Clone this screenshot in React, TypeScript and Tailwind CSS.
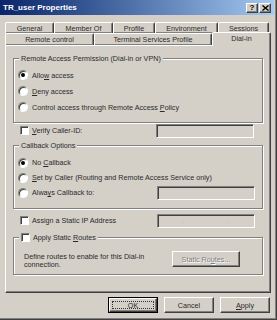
import type { ReactNode } from "react";

// Windows 2000 style "TR_user Properties" dialog, Dial-in tab.

const RAISED =
  "border border-t-white border-l-white border-r-[#404040] border-b-[#404040] shadow-[inset_-1px_-1px_0_#808080]";
const SUNKEN =
  "border border-t-[#808080] border-l-[#808080] border-r-white border-b-white shadow-[inset_1px_1px_0_#404040]";

function Radio({ checked = false }: { checked?: boolean }) {
  return (
    <span
      className={`flex h-[10px] w-[10px] shrink-0 items-center justify-center rounded-full bg-white ${SUNKEN}`}
    >
      {checked && <span className="h-[4px] w-[4px] rounded-full bg-black" />}
    </span>
  );
}

function Checkbox() {
  return <span className={`h-[9px] w-[9px] shrink-0 bg-white ${SUNKEN}`} />;
}

function Field({ children }: { children?: ReactNode }) {
  return (
    <div
      className={`ml-auto flex h-[14px] w-[98px] items-center bg-[#d4d0c8] ${SUNKEN}`}
    >
      {children}
    </div>
  );
}

function Group({
  label,
  className,
  children,
}: {
  label: ReactNode;
  className: string;
  children: ReactNode;
}) {
  return (
    <div
      className={`relative w-[250px] border border-[#808080] shadow-[inset_1px_1px_0_#fff,1px_1px_0_#fff] ${className}`}
    >
      <div className="absolute -top-[5px] left-[5px] flex h-[9px] items-center gap-[3px] bg-[#d4d0c8] px-[2px]">
        {label}
      </div>
      {children}
    </div>
  );
}

function Option({
  checked,
  children,
}: {
  checked?: boolean;
  children: ReactNode;
}) {
  return (
    <div className="flex h-[15px] items-center gap-[4px]">
      <Radio checked={checked} />
      <span className="whitespace-nowrap">{children}</span>
    </div>
  );
}

function Tab({ width, children }: { width: string; children: ReactNode }) {
  return (
    <div
      className={`flex h-full shrink-0 items-center justify-center rounded-t-[2px] border-b-0 ${RAISED} ${width}`}
    >
      <span className="whitespace-nowrap">{children}</span>
    </div>
  );
}

function DialogButton({
  children,
  isDefault = false,
}: {
  children: ReactNode;
  isDefault?: boolean;
}) {
  if (isDefault) {
    return (
      <div className="h-[16px] w-[50px] border border-black">
        <div className={`flex h-full items-center justify-center p-[2px] ${RAISED}`}>
          <div className="flex h-full w-full items-center justify-center border border-dotted border-[#333]">
            {children}
          </div>
        </div>
      </div>
    );
  }
  return (
    <div className={`flex h-[16px] w-[50px] items-center justify-center ${RAISED}`}>
      {children}
    </div>
  );
}

export default function App() {
  return (
    <div className="h-[320px] w-[277px] overflow-hidden border-r border-b border-[#404040] bg-[#d4d0c8] font-['Liberation_Sans',Arial,sans-serif] text-[7.2px] leading-[9px] text-[#2a2a2a] shadow-[inset_-1px_-1px_0_#808080]">
      {/* title bar */}
      <div className="mr-[2px] flex h-[15px] items-center bg-gradient-to-r from-[#0a246a] to-[#a6caf0] pl-[3px] pr-[3px]">
        <span className="text-[8px] font-bold leading-[10px] text-white">
          TR_user Properties
        </span>
        <div className="ml-auto flex gap-[1px]">
          <div className={`flex h-[10px] w-[12px] items-center justify-center bg-[#d4d0c8] ${RAISED}`}>
            <span className="text-[8px] font-bold leading-[8px] text-black">?</span>
          </div>
          <div className={`flex h-[10px] w-[12px] items-center justify-center bg-[#d4d0c8] ${RAISED}`}>
            <svg width="7" height="6" viewBox="0 0 7 6">
              <path d="M0.5 0.5 L6.5 5.5 M6.5 0.5 L0.5 5.5" stroke="#000" strokeWidth="1.4" />
            </svg>
          </div>
        </div>
      </div>

      <div className="ml-[5px] mt-[7px] w-[266px]">
        {/* back tab row */}
        <div className="flex h-[11px]">
          <Tab width="w-[49px]">General</Tab>
          <Tab width="w-[59px]">Member Of</Tab>
          <Tab width="w-[42px]">Profile</Tab>
          <Tab width="w-[63px]">Environment</Tab>
          <Tab width="w-[51px]">Sessions</Tab>
        </div>
        {/* front tab row */}
        <div className="flex h-[12px] items-end">
          <Tab width="w-[89px]">Remote control</Tab>
          <Tab width="w-[118px]">Terminal Services Profile</Tab>
          <div className="relative z-10 -mb-[1px] flex h-[14px] w-[59px] shrink-0 items-center justify-center rounded-t-[2px] border border-b-0 border-t-white border-l-white border-r-[#404040] bg-[#d4d0c8] pb-[2px] shadow-[inset_-1px_0_0_#808080]">
            Dial-in
          </div>
        </div>

        {/* tab page */}
        <div className="h-[248px] border border-t-white border-l-white border-r-[#404040] border-b-[#404040] pl-[7px] pt-[12px] shadow-[inset_-1px_-1px_0_#808080]">
          <Group
            className="h-[65px] pl-[4px] pt-[8px]"
            label={<span>Remote Access Permission (Dial-in or VPN)</span>}
          >
            <div className="flex flex-col">
              <div className="flex h-[16px] items-center gap-[4px]">
                <Radio checked />
                <span>
                  Allo<u>w</u> access
                </span>
              </div>
              <div className="flex h-[16px] items-center gap-[4px]">
                <Radio />
                <span>
                  <u>D</u>eny access
                </span>
              </div>
              <div className="flex h-[16px] items-center gap-[4px]">
                <Radio />
                <span>
                  Control access through Remote Access <u>P</u>olicy
                </span>
              </div>
            </div>
          </Group>

          <div className="flex h-[15px] w-[250px] items-center gap-[3px] pl-[7px] pr-[9px]">
            <Checkbox />
            <span>
              <u>V</u>erify Caller-ID:
            </span>
            <Field />
          </div>

          <Group
            className="mt-[7px] h-[64px] pl-[4px] pr-[7px] pt-[9px]"
            label={<span>Callback Options</span>}
          >
            <Option checked>
              No <u>C</u>allback
            </Option>
            <Option>
              <u>S</u>et by Caller (Routing and Remote Access Service only)
            </Option>
            <div className="flex h-[15px] items-center gap-[4px]">
              <Radio />
              <span>
                Alwa<u>y</u>s Callback to:
              </span>
              <Field />
            </div>
          </Group>

          <div className="mt-[4px] flex h-[15px] w-[250px] items-center gap-[3px] pl-[7px] pr-[8px]">
            <Checkbox />
            <span>Assign a Static IP Address</span>
            <Field>
              <div className="flex w-full justify-around px-[14px] text-[#b8b4ac]">
                <span>.</span>
                <span>.</span>
                <span>.</span>
              </div>
            </Field>
          </div>

          <Group
            className="mt-[9px] flex h-[38px] items-start pl-[10px] pt-[13px]"
            label={
              <>
                <Checkbox />
                <span>
                  Apply Static <u>R</u>outes
                </span>
              </>
            }
          >
            <div className="mt-[2px] whitespace-nowrap leading-[8px]">
              Define routes to enable for this Dial-in
              <br />
              connection.
            </div>
            <div
              className={`ml-auto mr-[22px] flex h-[16px] w-[68px] shrink-0 items-center justify-center text-[#808080] [text-shadow:1px_1px_0_#fff] ${RAISED}`}
            >
              <span>
                Static Ro<u>u</u>tes...
              </span>
            </div>
          </Group>
        </div>
      </div>

      {/* dialog buttons */}
      <div className="mt-[4px] flex gap-[6px] pl-[108px]">
        <DialogButton isDefault>OK</DialogButton>
        <DialogButton>Cancel</DialogButton>
        <DialogButton>
          <span>
            <u>A</u>pply
          </span>
        </DialogButton>
      </div>
    </div>
  );
}
